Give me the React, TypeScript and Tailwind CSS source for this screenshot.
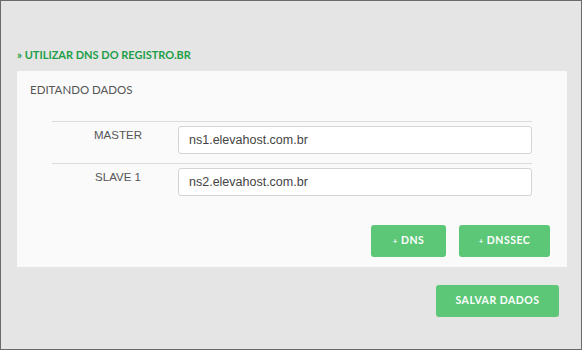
import React from 'react';

const rows = [
  { label: 'MASTER', value: 'ns1.elevahost.com.br' },
  { label: 'SLAVE 1', value: 'ns2.elevahost.com.br' },
];

function GreenButton({ children, className }: { children: React.ReactNode; className?: string }) {
  return (
    <button
      className={
        'flex items-center justify-center rounded-[3px] bg-[#5cc777] text-white text-[10.5px] font-bold tracking-[0.5px] font-["Lato",sans-serif] ' +
        (className || '')
      }
    >
      {children}
    </button>
  );
}

export default function App() {
  return (
    <div className="w-[582px] h-[350px] border border-[#6a6a6a] bg-[#e5e5e5] pl-[16px] pr-[14px] pt-[45px]">
      <h2 className="text-[11px] font-bold text-[#1d9e48] leading-[18px] font-['Lato',sans-serif]">» UTILIZAR DNS DO REGISTRO.BR</h2>

      <div className="mt-[7px] h-[196px] bg-[#fafafa] pt-[12px] pl-[13px] pr-[17px]">
        <p className="text-[11.5px] text-[#555] leading-[14px] font-['Lato',sans-serif]">EDITANDO DADOS</p>

        <div className="ml-[22px] mt-[24px] w-[480px]">
          {rows.map((r) => (
            <div key={r.label} className="flex border-t border-[#dcdcdc] h-[42px] pt-[4px]">
              <div className="w-[126px] pl-[6px] text-center text-[11.5px] text-[#555] font-['Liberation_Sans',sans-serif] leading-[18px]">
                {r.label}
              </div>
              <div className="flex-1 h-[28px] rounded-[3px] border border-[#d4d4d4] bg-white pl-[10px] flex items-center text-[12.5px] text-[#444] font-['Liberation_Sans',sans-serif]">
                {r.value}
              </div>
            </div>
          ))}
        </div>

        <div className="flex justify-end gap-[13px] mt-[20px]">
          <GreenButton className="w-[75px] h-[32px]">
            <span className="mr-[3px] text-[8px]">+</span>DNS
          </GreenButton>
          <GreenButton className="w-[91px] h-[32px]">
            <span className="mr-[3px] text-[8px]">+</span>DNSSEC
          </GreenButton>
        </div>
      </div>

      <div className="flex justify-end mt-[18px] pr-[8px]">
        <GreenButton className="w-[123px] h-[32px]">SALVAR DADOS</GreenButton>
      </div>
    </div>
  );
}
